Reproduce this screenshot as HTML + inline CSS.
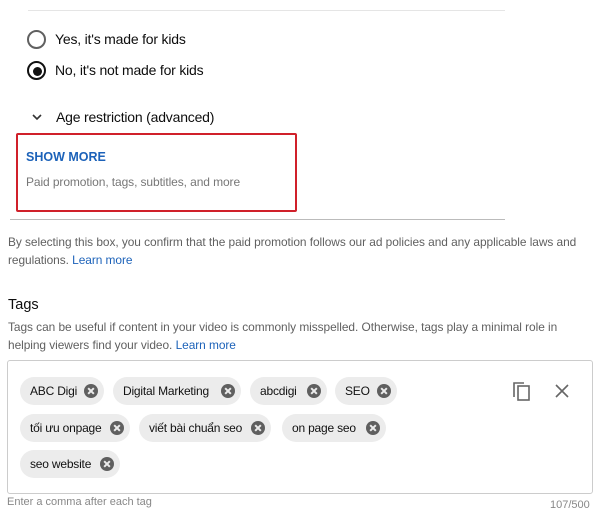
<!DOCTYPE html>
<html><head><style>
body{margin:0;width:600px;height:520px;background:#fff;font-family:"Liberation Sans","DejaVu Sans",sans-serif;position:relative;overflow:hidden;color:#0d0d0d}
.a{position:absolute;white-space:nowrap}
.radio{position:absolute;width:15px;height:15px;border:2px solid #606060;border-radius:50%}
.chip{position:absolute;height:28px;background:#ececec;border-radius:14px;font-size:12px;color:#111;line-height:28px;padding-left:10px;box-sizing:border-box;letter-spacing:-0.2px}
.chip i{position:absolute;right:6px;top:7px;width:14px;height:14px;border-radius:50%;background:#5f5f5f}
.chip i:before,.chip i:after{content:"";position:absolute;left:3px;top:6px;width:8px;height:2px;background:#ececec;transform:rotate(45deg)}
.chip i:after{transform:rotate(-45deg)}
</style></head><body>
<div class="a" style="left:28px;top:10px;width:477px;height:1px;background:#e5e5e5"></div>
<div class="radio" style="left:27px;top:30px"></div>
<div class="a" style="left:55px;top:31px;font-size:14px;letter-spacing:-0.2px">Yes, it's made for kids</div>
<div class="radio" style="left:27px;top:61px;border-color:#111"></div>
<div class="a" style="left:33px;top:67px;width:9px;height:9px;border-radius:50%;background:#111"></div>
<div class="a" style="left:55px;top:62px;font-size:14px;letter-spacing:-0.2px">No, it's not made for kids</div>
<svg class="a" style="left:31px;top:112px" width="12" height="10"><path d="M2 3l4 4 4-4" stroke="#333" stroke-width="1.6" fill="none"/></svg>
<div class="a" style="left:56px;top:109px;font-size:14px;letter-spacing:-0.2px">Age restriction (advanced)</div>
<div class="a" style="left:16px;top:133px;width:277px;height:75px;border:2px solid #d0202a;border-radius:2px"></div>
<div class="a" style="left:26px;top:150px;font-size:12.5px;font-weight:bold;color:#1c62b9">SHOW MORE</div>
<div class="a" style="left:26px;top:175px;font-size:12px;color:#777;letter-spacing:-0.1px">Paid promotion, tags, subtitles, and more</div>
<div class="a" style="left:10px;top:219px;width:495px;height:1px;background:#bbb"></div>
<div class="a" style="left:8px;top:233px;font-size:11.9px;color:#606060;line-height:18px;letter-spacing:-0.05px">By selecting this box, you confirm that the paid promotion follows our ad policies and any applicable laws and<br>regulations. <span style="color:#1c62b9">Learn more</span></div>
<div class="a" style="left:8px;top:297px;font-size:14.5px">Tags</div>
<div class="a" style="left:8px;top:318px;font-size:11.9px;color:#606060;line-height:18px;letter-spacing:-0.05px">Tags can be useful if content in your video is commonly misspelled. Otherwise, tags play a minimal role in<br>helping viewers find your video. <span style="color:#1c62b9">Learn more</span></div>
<div class="a" style="left:7px;top:360px;width:584px;height:132px;border:1px solid #ccc;border-radius:3px"></div>
<div class="chip" style="left:20px;top:377px;width:84px">ABC Digi<i></i></div>
<div class="chip" style="left:113px;top:377px;width:128px">Digital Marketing<i></i></div>
<div class="chip" style="left:250px;top:377px;width:77px">abcdigi<i></i></div>
<div class="chip" style="left:335px;top:377px;width:62px">SEO<i></i></div>
<div class="chip" style="left:20px;top:414px;width:110px">tối ưu onpage<i></i></div>
<div class="chip" style="left:139px;top:414px;width:132px">viết bài chuẩn seo<i></i></div>
<div class="chip" style="left:282px;top:414px;width:104px">on page seo<i></i></div>
<div class="chip" style="left:20px;top:450px;width:100px">seo website<i></i></div>
<svg class="a" style="left:511px;top:380px" width="20" height="22"><path d="M3 17V3h10" stroke="#666" stroke-width="1.6" fill="none"/><rect x="7" y="6" width="11" height="14" stroke="#666" stroke-width="1.6" fill="none"/></svg>
<svg class="a" style="left:554px;top:383px" width="16" height="16"><path d="M2 2l12 12M14 2L2 14" stroke="#666" stroke-width="1.6"/></svg>
<div class="a" style="left:7px;top:496px;font-size:11px;color:#888">Enter a comma after each tag</div>
<div class="a" style="left:550px;top:499px;font-size:11px;color:#888">107/500</div>
</body></html>
